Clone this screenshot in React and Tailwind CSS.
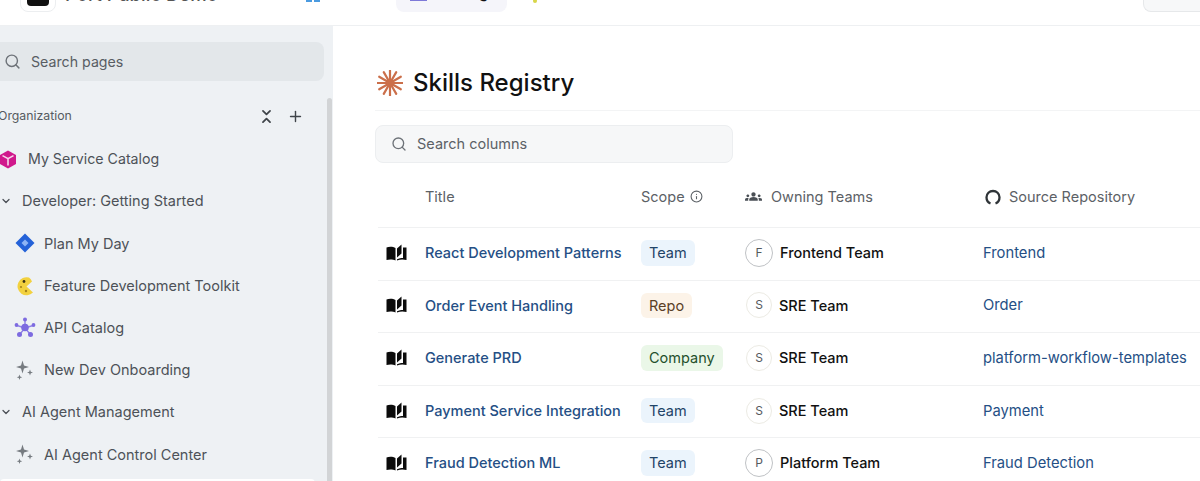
import { ChevronDown, ChevronsDownUp, Info, Plus, Search } from "lucide-react";
import { MdGroups } from "react-icons/md";

const rows = [
  { title: "React Development Patterns", scope: "Team", team: "Frontend Team", letter: "F", repo: "Frontend" },
  { title: "Order Event Handling", scope: "Repo", team: "SRE Team", letter: "S", repo: "Order" },
  { title: "Generate PRD", scope: "Company", team: "SRE Team", letter: "S", repo: "platform-workflow-templates" },
  { title: "Payment Service Integration", scope: "Team", team: "SRE Team", letter: "S", repo: "Payment" },
  { title: "Fraud Detection ML", scope: "Team", team: "Platform Team", letter: "P", repo: "Fraud Detection" },
];

const scopeStyles = {
  Team: "bg-[#ebf4fc] text-[#1f4468]",
  Repo: "bg-[#fcf3e8] text-[#5a4026]",
  Company: "bg-[#eaf7e8] text-[#24502c]",
};

function CubeIcon() {
  return (
    <svg width="18" height="19" viewBox="0 0 18 19" className="-ml-[1px]">
      <path d="M9 0.500 17 5v9l-8 4.500L1 14V5z" fill="#d0198c" />
      <path d="M3.500 5.600 9 8.600l5.500-3M9 8.600v7" fill="none" stroke="#f7d7ea" strokeWidth="1.600" />
    </svg>
  );
}

function JiraIcon() {
  return (
    <svg width="20" height="20" viewBox="0 0 20 20">
      <path d="M10 0.500 19.500 10 10 19.500 0.500 10z" fill="#2462d8" />
      <path d="M10 6.500 13.500 10 10 13.500 6.500 10z" fill="#8db4f5" />
    </svg>
  );
}

function CookieIcon() {
  return (
    <svg width="18" height="20" viewBox="0 0 18 20">
      <path d="M13 1.600A9 9 0 1 0 17 16.500L10.500 10.500 16 5.500A9 9 0 0 0 13 1.600z" fill="#f2d13f" />
      <circle cx="8" cy="5.500" r="1.400" fill="#3d3415" />
      <circle cx="5" cy="11" r="1.100" fill="#a5851c" />
      <circle cx="10" cy="15" r="1.200" fill="#a5851c" />
    </svg>
  );
}

function ApiIcon() {
  return (
    <svg width="22" height="21" viewBox="0 0 22 21" fill="#7d6be0">
      <path d="M11 4 11 11M3 8.500 11 11l8-2.500M6 17l5-6 5 6" stroke="#8f80e6" strokeWidth="1.400" fill="none" />
      <circle cx="11" cy="2.500" r="2" />
      <circle cx="2.500" cy="8" r="1.900" />
      <circle cx="19.500" cy="8" r="1.900" />
      <circle cx="5.500" cy="17.500" r="2.500" />
      <circle cx="16.500" cy="17.500" r="2.500" />
      <circle cx="11" cy="10.500" r="3.800" />
    </svg>
  );
}

function SparkleIcon() {
  return (
    <svg width="18" height="20" viewBox="0 0 18 20" fill="#767b80">
      <path d="M6.500 0.500 8 5.500l5 1.500-5 1.500-1.500 5-1.500-5L0 7l5-1.500z" />
      <path d="M14 9.500l.8 2.200 2.200.8-2.200.8-.8 2.200-.8-2.200-2.200-.8 2.200-.8z" />
      <path d="M3.500 14.500l.7 2 2 .7-2 .7-.7 2-.7-2-2-.7 2-.7z" />
    </svg>
  );
}

function BurstIcon() {
  const angles = [0, 30, 60, 90, 120, 150, 180, 210, 240, 270, 300, 330];
  return (
    <svg width="26" height="26" viewBox="0 0 26 26">
      {angles.map((a) => (
        <path key={a} d="M13 13V0.500" stroke="#cb6f4a" strokeWidth="2.200" strokeLinecap="round" transform={`rotate(${a} 13 13)`} />
      ))}
      <circle cx="13" cy="13" r="4" fill="#cb6f4a" />
    </svg>
  );
}

function BookIcon() {
  return (
    <svg width="21" height="17" viewBox="0 0 21 17" className="-mt-[1px] shrink-0">
      <path d="M0.500 3.500C3 2.500 7 2.500 9.500 4v12.500C7 15.200 3 15.200 0.500 16z" fill="#0b0b0b" />
      <path d="M11 4.500 15.500 0.500v9L11 13.500z" fill="#0b0b0b" />
      <path d="M17 3.500h3.500V16c-3-.8-6.500-.8-9.500.5V15.200c2-.9 4-1.200 6-1.200z" fill="#0b0b0b" />
    </svg>
  );
}

function GithubRing() {
  return (
    <svg width="16" height="16" viewBox="0 0 16 16" fill="none" stroke="#2f3438" strokeWidth="2.300" className="shrink-0">
      <path d="M5.500 14.500C2.800 13.500 1.500 11 1.500 8.300 1.500 4.600 4.400 2 8 2s6.500 2.600 6.500 6.300c0 2.700-1.300 5.200-4 6.200" />
    </svg>
  );
}

function NavRow({ icon, label }) {
  return (
    <div className="flex h-[42.200px] items-center">
      <span className="flex w-[44px] shrink-0 justify-center pl-[6px]">{icon}</span>
      <span>{label}</span>
    </div>
  );
}

function NavGroup({ label }) {
  return (
    <div className="flex h-[42.200px] items-center">
      <ChevronDown size={12} strokeWidth={2.500} className="mr-[10px] text-[#4a4f55]" />
      <span>{label}</span>
    </div>
  );
}

export default function App() {
  return (
    <div className="flex h-[481px] w-[1200px] flex-col overflow-hidden bg-white font-['Inter','Liberation_Sans',sans-serif]">
      {/* top bar, cut off by the top edge of the picture */}
      <header className="flex h-[26px] shrink-0 items-start overflow-hidden border-b border-[#eef0f2]">
        <div className="-mt-[24px] ml-[20px] flex h-[36px] w-[36px] shrink-0 items-start justify-center rounded-lg border border-[#eceef0] bg-white">
          <div className="mt-[13px] h-[16px] w-[22px] rounded-b bg-[#111]" />
        </div>
        <span className="-mt-[16px] ml-[9px] w-[155px] shrink-0 whitespace-nowrap text-[18.500px] font-medium leading-[20px] text-[#555]">Port Public Demo</span>
        <div className="-mt-[2px] ml-[86px] flex h-[4px] w-[14px] shrink-0 gap-[2px]">
          <span className="flex-1 bg-[#4b9be0]" />
          <span className="flex-1 bg-[#4b9be0]" />
        </div>
        <div className="-mt-[24px] ml-[76px] flex h-[36px] w-[111px] shrink-0 items-start gap-[6px] rounded-lg bg-[#f5f5fa] pl-[14px] pt-[24px]">
          <span className="h-[1px] w-[17px] bg-[#7e79d8]" />
          <span className="-mt-[17px] text-[15px] font-medium leading-[20px] text-[#111]">Catalog</span>
        </div>
        <span className="-mt-[1px] ml-[26px] h-[4px] w-[4px] shrink-0 rounded-full bg-[#d8d64a]" />
        <div className="-mt-[24px] ml-auto h-[36px] w-[57px] rounded-l-lg border border-r-0 border-[#e6e8ea] bg-[#f7f8f9]" />
      </header>

      <div className="flex min-h-0 flex-1">
        <aside className="relative w-[333px] shrink-0 bg-[#eef1f4] text-[14.500px] text-[#4d5258]">
          <div className="-ml-[10px] mr-[9px] mt-[16px] flex h-[39px] items-center rounded-lg bg-[#e3e7ea] pl-[14px] text-[14.200px] text-[#585d63]">
            <Search size={17} strokeWidth={2} className="mr-[10px] text-[#6d7278]" />
            <span>Search pages</span>
          </div>

          <div className="mt-[21px] flex h-[28px] items-center justify-between pr-[29px]">
            <span className="-ml-[2px] text-[12.300px] text-[#565b61]">Organization</span>
            <div className="flex items-center gap-[12px] text-[#3f4449]">
              <ChevronsDownUp size={17} strokeWidth={2.500} />
              <Plus size={17} strokeWidth={2} />
            </div>
          </div>

          <div className="mt-[8px]">
            <div className="flex h-[42.200px] items-center">
              <span className="w-[28px] shrink-0"><CubeIcon /></span>
              <span className="text-[14.200px]">My Service Catalog</span>
            </div>
            <NavGroup label="Developer: Getting Started" />
            <NavRow icon={<JiraIcon />} label="Plan My Day" />
            <NavRow icon={<CookieIcon />} label="Feature Development Toolkit" />
            <NavRow icon={<ApiIcon />} label="API Catalog" />
            <NavRow icon={<SparkleIcon />} label="New Dev Onboarding" />
            <NavGroup label="AI Agent Management" />
            <NavRow icon={<SparkleIcon />} label="AI Agent Control Center" />
            <div className="mr-[18px] mt-[3px] h-[10px] rounded-t bg-white" />
          </div>

          {/* scrollbar */}
          <div className="absolute bottom-0 right-[1px] top-[72px] w-[5px] rounded-t bg-[#d2d4d6]" />
        </aside>

        <main className="min-w-0 flex-1 pl-[42px]">
          <div className="flex h-[85px] items-center gap-[10px] border-b border-[#f3f4f5] pl-[2px] pt-[30px]">
            <BurstIcon />
            <h1 className="text-[24px] font-medium leading-none text-[#111]">Skills Registry</h1>
          </div>

          <div className="mt-[14px] flex h-[38px] w-[358px] items-center rounded-lg border border-[#eceef0] bg-[#f6f7f8] pl-[15px] text-[14.500px] text-[#5c6166]">
            <Search size={16} strokeWidth={2} className="mr-[10px] text-[#6d7278]" />
            <span>Search columns</span>
          </div>

          <div className="ml-[3px] mt-[5px] text-[14.500px]">
            <div className="grid h-[60px] grid-cols-[47px_216px_104px_238px_1fr] items-center border-b border-[#f0f1f2] pb-[2px] text-[#5c6166]">
              <span />
              <span>Title</span>
              <span className="flex items-center gap-[5px]">
                Scope <Info size={13} strokeWidth={2} />
              </span>
              <span className="flex items-center gap-[9px]">
                <MdGroups size={17} className="text-[#4a4f55]" /> Owning Teams
              </span>
              <span className="flex items-center gap-[8px] pl-[2px]">
                <GithubRing /> Source Repository
              </span>
            </div>

            {rows.map((row) => (
              <div
                key={row.title}
                className="grid h-[52.600px] grid-cols-[47px_216px_104px_238px_1fr] items-center border-b border-[#f0f1f2] pb-[2px]"
              >
                <span className="pl-[8px]"><BookIcon /></span>
                <span className="whitespace-nowrap font-medium text-[#254f85]">{row.title}</span>
                <span>
                  <span className={`inline-block rounded-md px-[8px] py-[2px] ${scopeStyles[row.scope]}`}>{row.scope}</span>
                </span>
                <span className="flex items-center gap-[7px] font-medium text-[#111]">
                  <span
                    className={
                      row.letter === "S"
                        ? "ml-[1px] flex h-[26px] w-[26px] items-center justify-center rounded-full border border-[#ecebe4] text-[12px] font-normal text-[#55595e]"
                        : "flex h-[28px] w-[28px] items-center justify-center rounded-full border border-[#bfc2c5] text-[12px] font-normal text-[#55595e]"
                    }
                  >
                    {row.letter}
                  </span>
                  {row.team}
                </span>
                <span className="whitespace-nowrap text-[14.750px] text-[#254f85]">{row.repo}</span>
              </div>
            ))}
          </div>
        </main>
      </div>
    </div>
  );
}
